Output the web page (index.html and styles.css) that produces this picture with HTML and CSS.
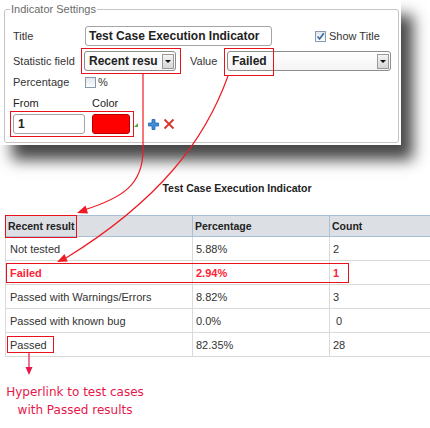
FILE: index.html
```html
<!DOCTYPE html>
<html>
<head>
<meta charset="utf-8">
<link rel="stylesheet" href="styles.css">
</head>
<body>
<div class="page">
  <div class="panel">
    <fieldset class="settings">
      <legend>Indicator Settings</legend>
      <div class="row r-title">
        <span class="lbl">Title</span>
        <div class="input title-input">Test Case Execution Indicator</div>
        <span class="show-title">
          <span class="chk"><svg width="9" height="9" viewBox="0 0 9 9"><path d="M1.5 4.5 L3.6 7 L7.8 1.2" fill="none" stroke="#3a66a8" stroke-width="1.6"/></svg></span>Show Title
        </span>
      </div>
      <div class="row r-stat">
        <span class="lbl">Statistic field</span>
        <span class="stat-wrap">
          <span class="select s1"><span class="sel-text">Recent resu</span><span class="sel-btn"><span class="tri"></span></span></span>
        </span>
        <span class="value-lbl">Value</span>
        <span class="select s2"><span class="sel-text">Failed</span><span class="sel-btn"><span class="tri"></span></span></span>
      </div>
      <div class="row r-pct">
        <span class="lbl">Percentage</span>
        <span class="chk empty"></span><span class="pct">%</span>
      </div>
      <div class="row r-heads">
        <span class="from-lbl">From</span><span>Color</span>
      </div>
      <div class="row r-from">
        <span class="from-wrap">
          <span class="input from-input">1</span>
          <span class="color-box"></span>
        </span>
        <span class="corner"></span>
        <svg class="plus" width="11" height="11" viewBox="0 0 11 11"><path d="M4 0.5h3v3.5h3.5v3h-3.5v3.5h-3v-3.5h-3.5v-3h3.5z" fill="#3f8fd8" stroke="#1f64b0" stroke-width="0.8"/></svg>
        <svg class="del" width="12" height="12" viewBox="0 0 12 12"><path d="M1.5 1.5 L10.5 10.5 M10.5 1.5 L1.5 10.5" stroke="#d9342b" stroke-width="1.8" fill="none"/></svg>
      </div>
    </fieldset>
  </div>

  <div class="tbl-title">Test Case Execution Indicator</div>

  <div class="tbl-wrap">
    <table class="grid">
      <colgroup><col class="c1"><col class="c2"><col class="c3"></colgroup>
      <thead>
        <tr><th>Recent result</th><th>Percentage</th><th>Count</th></tr>
      </thead>
      <tbody>
        <tr><td>Not tested</td><td>5.88%</td><td>2</td></tr>
        <tr class="failed"><td>Failed</td><td>2.94%</td><td>1</td></tr>
        <tr><td>Passed with Warnings/Errors</td><td>8.82%</td><td>3</td></tr>
        <tr><td>Passed with known bug</td><td>0.0%</td><td>&nbsp;0</td></tr>
        <tr><td><a class="plink">Passed</a></td><td>82.35%</td><td>28</td></tr>
      </tbody>
    </table>
  </div>

  <div class="note">Hyperlink to test cases<br>with Passed results</div>

  <svg class="overlay" width="430" height="428" viewBox="0 0 430 428">
    <g fill="none" stroke="#e8121e" stroke-width="1">
      <rect x="81.5" y="48.5" width="99" height="25"/>
      <rect x="224.5" y="48.5" width="49" height="27"/>
      <rect x="10.5" y="111.5" width="123" height="25"/>
      <rect x="5.5" y="215.5" width="71" height="22"/>
      <rect x="6.5" y="263.5" width="342" height="19"/>
      <rect x="7.5" y="336.5" width="46" height="16"/>
    </g>
    <g fill="none" stroke="#ee1c25" stroke-width="1.2">
      <path d="M143 74 L143 150 C143 185 122 198 84 210"/>
      <path d="M228 76 C205 140 160 200 66 258"/>
    </g>
    <g fill="#ee1c25">
      <polygon points="77,213 88,213.6 85.5,205.5"/>
      <polygon points="57,262 67.7,261.5 64.5,254"/>
    </g>
    <path d="M29 353 L29 369" stroke="#e8174a" stroke-width="1.2"/>
    <polygon points="25.5,367 32.5,367 29,375" fill="#e8174a"/>
  </svg>
</div>
</body>
</html>
```

FILE: styles.css
```css
html, body {
  margin: 0;
  padding: 0;
  background: #fff;
  overflow: hidden;
}

body {
  font-family: "Liberation Sans", Arial, sans-serif;
  color: #333;
}

.page {
  position: relative;
  width: 430px;
  height: 428px;
  overflow: hidden;
}

/* ---------- settings panel ---------- */
.panel {
  width: 395px;
  height: 140px;
  padding: 3px 2px 2px 4px;
  background: #fff;
  box-shadow: 12px 15px 14px rgba(0, 0, 0, 0.72);
}

.settings {
  box-sizing: border-box;
  width: 395px;
  height: 140px;
  margin: 0;
  padding: 10px 0 5px 8px;
  border: 1px solid #c4c4c4;
  border-radius: 3px;
}

.settings legend {
  font-size: 11px;
  line-height: 13px;
  color: #6b6b6b;
  padding: 0 1px;
  margin-left: -3px;
}

.row {
  display: flex;
  align-items: center;
  font-size: 11px;
  color: #333;
}

.lbl {
  flex: none;
  width: 72px;
}

.input {
  box-sizing: border-box;
  height: 20px;
  border: 1px solid #a5a5a5;
  border-radius: 3px;
  background: #fff;
  color: #222;
  font-weight: bold;
  font-size: 12px;
  line-height: 18px;
}

.r-title { height: 20px; }

.title-input {
  width: 187px;
  padding-left: 3px;
  white-space: nowrap;
  overflow: hidden;
}

.show-title {
  display: flex;
  align-items: center;
  margin-left: 43px;
}

.chk {
  box-sizing: border-box;
  width: 11px;
  height: 11px;
  border: 1px solid #8a9aab;
  background: linear-gradient(#e2e8ee, #fbfcfd);
  margin-right: 3px;
  display: flex;
  align-items: center;
  justify-content: center;
}

.chk svg { display: block; }

.r-stat {
  height: 26px;
  margin-top: 2px;
}

.stat-wrap {
  display: flex;
  margin-left: -4px;
  padding: 3px 5px 3px 3px;
}

.select {
  box-sizing: border-box;
  height: 20px;
  display: flex;
  align-items: center;
  justify-content: space-between;
  padding: 0 1px 0 4px;
  border: 1px solid #8d8d8d;
  border-radius: 3px;
  background: linear-gradient(#ffffff, #f4f4f4);
  font-weight: bold;
  font-size: 12px;
  color: #222;
}

.s1 { width: 92px; }
.s2 { width: 164px; }

.sel-btn {
  box-sizing: border-box;
  width: 12px;
  height: 15px;
  border: 1px solid #9a9a9a;
  background: linear-gradient(#f4f4f4, #d6d6d6);
  display: flex;
  align-items: center;
  justify-content: center;
}

.tri {
  width: 0;
  height: 0;
  border-left: 3px solid transparent;
  border-right: 3px solid transparent;
  border-top: 3px solid #111;
}

.value-lbl {
  width: 37px;
  margin-left: 9px;
}

.r-pct {
  height: 12px;
  margin-top: 2px;
}

.chk.empty { margin-right: 2px; }

.r-heads {
  height: 13px;
  margin-top: 8px;
  color: #222;
}

.from-lbl { width: 79px; }

.r-from {
  height: 26px;
  margin-top: 2px;
}

.from-wrap {
  display: flex;
  margin-left: -3px;
  padding: 3px;
}

.from-input {
  width: 72px;
  padding-left: 4px;
}

.color-box {
  box-sizing: border-box;
  width: 38px;
  height: 20px;
  margin-left: 7px;
  border: 1px solid #b80000;
  border-radius: 3px;
  background: #ff0000;
}

.corner {
  align-self: flex-start;
  margin-top: 12px;
  margin-left: 1px;
  width: 0;
  height: 0;
  border-left: 4px solid transparent;
  border-bottom: 4px solid #4caf3a;
}

.plus {
  display: block;
  margin-left: 10px;
}

.del {
  display: block;
  margin-left: 4px;
}

/* ---------- table ---------- */
.tbl-title {
  margin-top: 37px;
  text-align: center;
  width: 474px;
  font-weight: bold;
  font-size: 10.5px;
  line-height: 13px;
  color: #222;
}

.tbl-wrap {
  margin-top: 20px;
  margin-left: 5px;
  width: 470px;
}

.grid {
  border-collapse: collapse;
  table-layout: fixed;
  width: 470px;
  font-size: 11px;
  color: #333;
}

.grid col.c1 { width: 187px; }
.grid col.c2 { width: 137px; }
.grid col.c3 { width: 146px; }

.grid th {
  height: 20px;
  padding: 0 2px;
  text-align: left;
  font-weight: bold;
  font-size: 10.5px;
  color: #222;
  background: #dcdfe4;
  border: 1px solid #a9bfd8;
  white-space: nowrap;
}

.grid td {
  height: 23px;
  padding: 0 3px;
  border: 1px solid #dadada;
  white-space: nowrap;
}

.grid td:first-child { padding-left: 4px; }

.grid tr.failed td {
  color: #ff2236;
  font-weight: bold;
}

.plink {
  color: #333;
  text-decoration: none;
}

/* ---------- note ---------- */
.note {
  width: 150px;
  margin-top: 26px;
  text-align: center;
  font-family: "DejaVu Sans", sans-serif;
  font-size: 12px;
  line-height: 18px;
  color: #e8174a;
}

.overlay {
  position: absolute;
  left: 0;
  top: 0;
  pointer-events: none;
}
```
